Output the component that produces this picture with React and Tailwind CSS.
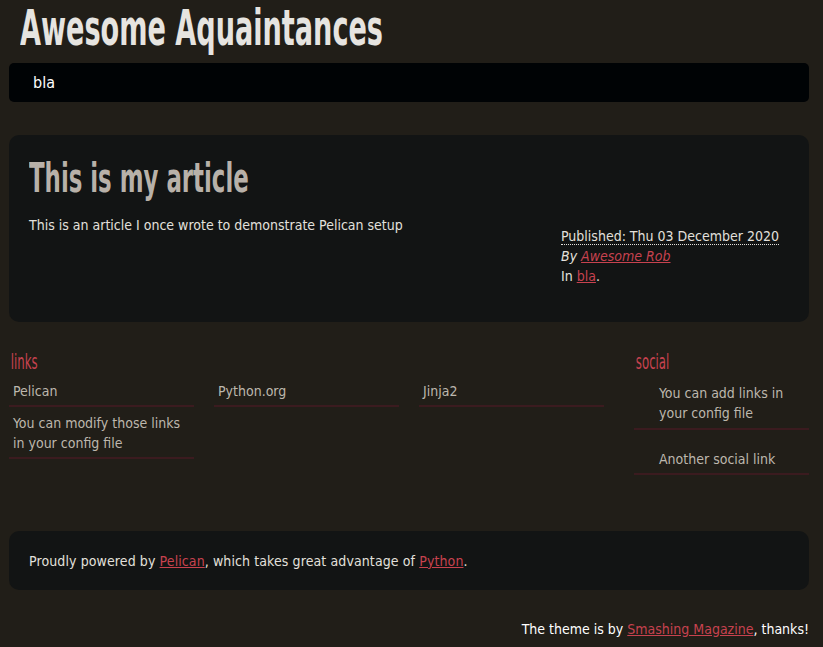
const links = ["Pelican", "Python.org", "Jinja2", "You can modify those links in your config file"];

const App = () => {
  return (
    <div className="min-h-screen bg-[#211e18] font-['DejaVu_Sans_Condensed',sans-serif] text-[14px] leading-[20px] text-[#e3e0dc]">
      <div className="w-[800px] ml-[9px] pb-[8px]">
        <header className="h-[63px] pl-[11px] pt-[1px]">
          <h1 className="inline-block origin-left scale-x-[0.615] font-['DejaVu_Sans_Condensed',sans-serif] font-bold text-[49px] leading-[56px] text-[#e6e4e0] whitespace-nowrap">
            Awesome Aquaintances
          </h1>
        </header>

        <nav className="h-[39px] bg-[#000305] rounded-[5px] pl-[24px] flex items-center text-[16px] text-white">
          bla
        </nav>

        <section className="mt-[33px] h-[187px] bg-[#121414] rounded-[10px] px-[20px] pt-[18px]">
          <h2 className="inline-block origin-left scale-x-[0.62] font-['DejaVu_Sans_Condensed',sans-serif] font-bold text-[41px] leading-[50px] text-[#b8b1a9] whitespace-nowrap">
            This is my article
          </h2>
          <div className="flex justify-between mt-[12px]">
            <p>This is an article I once wrote to demonstrate Pelican setup</p>
            <div className="w-[228px] mt-[11px]">
              <p>
                <abbr className="no-underline border-b border-dotted border-[#e3e0dc]">Published: Thu 03 December 2020</abbr>
              </p>
              <p className="italic">
                By <a className="text-[#c7424f] underline">Awesome Rob</a>
              </p>
              <p>
                In <a className="text-[#c7424f] underline">bla</a>.
              </p>
            </div>
          </div>
        </section>

        <div className="mt-[27px] flex justify-between">
          <div className="w-[615px]">
            <h3 className="pl-[3px] inline-block origin-left scale-x-[0.62] font-['DejaVu_Sans_Condensed',sans-serif] text-[21px] leading-[26px] text-[#c7424f]">
              links
            </h3>
            <ul className="grid grid-cols-[185px_185px_185px] gap-x-[20px]">
              {links.map((l) => (
                <li key={l} className="pl-[4px] pr-[8px] pt-[6px] pb-[4px] border-b-2 border-[#3b1b1f] text-[#bdb7ad]">
                  {l}
                </li>
              ))}
            </ul>
          </div>
          <div className="w-[175px]">
            <h3 className="pl-[3px] inline-block origin-left scale-x-[0.62] font-['DejaVu_Sans_Condensed',sans-serif] text-[21px] leading-[26px] text-[#c7424f]">
              social
            </h3>
            <ul className="text-[#bdb7ad]">
              <li className="pl-[25px] pr-[8px] pt-[8px] pb-[5px] border-b-2 border-[#3b1b1f]">
                You can add links in your config file
              </li>
              <li className="pl-[25px] pt-[19px] pb-[4px] border-b-2 border-[#3b1b1f]">
                Another social link
              </li>
            </ul>
          </div>
        </div>

        <footer className="mt-[56px] h-[59px] bg-[#121414] rounded-[10px] px-[20px] flex items-center">
          <p className="tracking-[0.1px]">
            Proudly powered by <a className="text-[#c7424f] underline">Pelican</a>, which takes great advantage of{" "}
            <a className="text-[#c7424f] underline">Python</a>.
          </p>
        </footer>

        <p className="mt-[29px] text-right text-white">
          The theme is by <a className="text-[#c7424f] underline">Smashing Magazine</a>, thanks!
        </p>
      </div>
    </div>
  );
};

export default App;
